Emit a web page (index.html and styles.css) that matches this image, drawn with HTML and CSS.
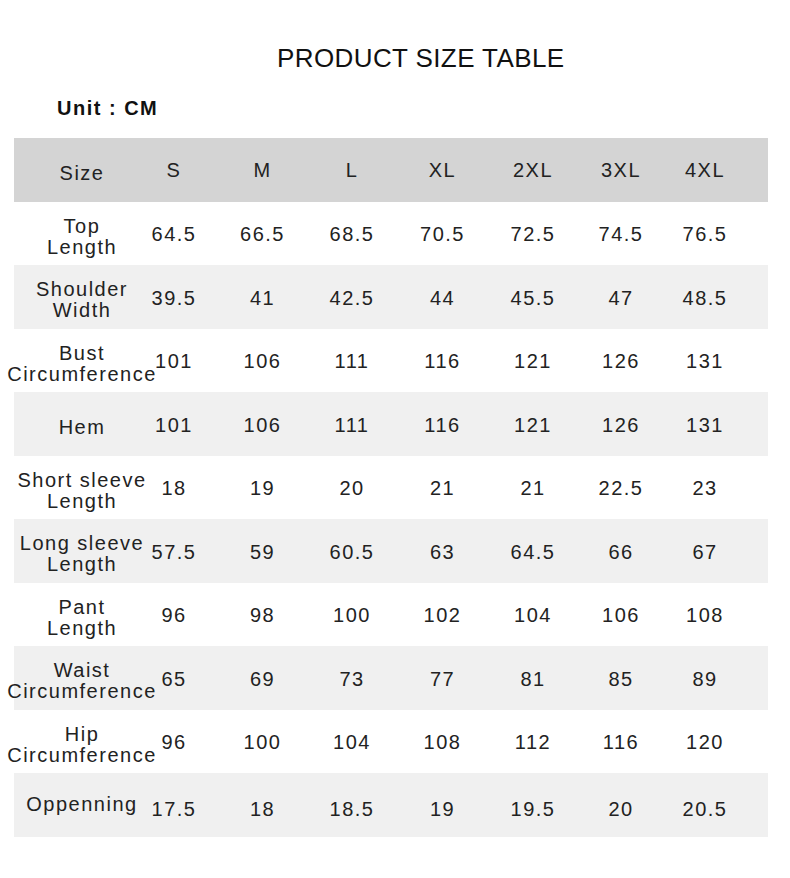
FILE: index.html
```html
<!DOCTYPE html>
<html lang="en">
<head>
<meta charset="utf-8">
<title>Product Size Table</title>
<link rel="stylesheet" href="styles.css">
</head>
<body>
<div class="page">
  <h1 class="title">PRODUCT SIZE TABLE</h1>
  <div class="unit">Unit : CM</div>
  <div class="table">
    <div class="row head">
      <div class="cell label"><span>Size</span></div>
      <div class="cell"><span>S</span></div>
      <div class="cell"><span>M</span></div>
      <div class="cell"><span>L</span></div>
      <div class="cell"><span>XL</span></div>
      <div class="cell"><span>2XL</span></div>
      <div class="cell"><span>3XL</span></div>
      <div class="cell"><span>4XL</span></div>
      <div class="cell"></div>
    </div>
    <div class="row">
      <div class="cell label"><span>Top<br>Length</span></div>
      <div class="cell"><span>64.5</span></div>
      <div class="cell"><span>66.5</span></div>
      <div class="cell"><span>68.5</span></div>
      <div class="cell"><span>70.5</span></div>
      <div class="cell"><span>72.5</span></div>
      <div class="cell"><span>74.5</span></div>
      <div class="cell"><span>76.5</span></div>
      <div class="cell"></div>
    </div>
    <div class="row alt">
      <div class="cell label"><span>Shoulder<br>Width</span></div>
      <div class="cell"><span>39.5</span></div>
      <div class="cell"><span>41</span></div>
      <div class="cell"><span>42.5</span></div>
      <div class="cell"><span>44</span></div>
      <div class="cell"><span>45.5</span></div>
      <div class="cell"><span>47</span></div>
      <div class="cell"><span>48.5</span></div>
      <div class="cell"></div>
    </div>
    <div class="row">
      <div class="cell label"><span>Bust<br>Circumference</span></div>
      <div class="cell"><span>101</span></div>
      <div class="cell"><span>106</span></div>
      <div class="cell"><span>111</span></div>
      <div class="cell"><span>116</span></div>
      <div class="cell"><span>121</span></div>
      <div class="cell"><span>126</span></div>
      <div class="cell"><span>131</span></div>
      <div class="cell"></div>
    </div>
    <div class="row alt">
      <div class="cell label"><span>Hem</span></div>
      <div class="cell"><span>101</span></div>
      <div class="cell"><span>106</span></div>
      <div class="cell"><span>111</span></div>
      <div class="cell"><span>116</span></div>
      <div class="cell"><span>121</span></div>
      <div class="cell"><span>126</span></div>
      <div class="cell"><span>131</span></div>
      <div class="cell"></div>
    </div>
    <div class="row">
      <div class="cell label"><span>Short sleeve<br>Length</span></div>
      <div class="cell"><span>18</span></div>
      <div class="cell"><span>19</span></div>
      <div class="cell"><span>20</span></div>
      <div class="cell"><span>21</span></div>
      <div class="cell"><span>21</span></div>
      <div class="cell"><span>22.5</span></div>
      <div class="cell"><span>23</span></div>
      <div class="cell"></div>
    </div>
    <div class="row alt">
      <div class="cell label"><span>Long sleeve<br>Length</span></div>
      <div class="cell"><span>57.5</span></div>
      <div class="cell"><span>59</span></div>
      <div class="cell"><span>60.5</span></div>
      <div class="cell"><span>63</span></div>
      <div class="cell"><span>64.5</span></div>
      <div class="cell"><span>66</span></div>
      <div class="cell"><span>67</span></div>
      <div class="cell"></div>
    </div>
    <div class="row">
      <div class="cell label"><span>Pant<br>Length</span></div>
      <div class="cell"><span>96</span></div>
      <div class="cell"><span>98</span></div>
      <div class="cell"><span>100</span></div>
      <div class="cell"><span>102</span></div>
      <div class="cell"><span>104</span></div>
      <div class="cell"><span>106</span></div>
      <div class="cell"><span>108</span></div>
      <div class="cell"></div>
    </div>
    <div class="row alt">
      <div class="cell label"><span>Waist<br>Circumference</span></div>
      <div class="cell"><span>65</span></div>
      <div class="cell"><span>69</span></div>
      <div class="cell"><span>73</span></div>
      <div class="cell"><span>77</span></div>
      <div class="cell"><span>81</span></div>
      <div class="cell"><span>85</span></div>
      <div class="cell"><span>89</span></div>
      <div class="cell"></div>
    </div>
    <div class="row">
      <div class="cell label"><span>Hip<br>Circumference</span></div>
      <div class="cell"><span>96</span></div>
      <div class="cell"><span>100</span></div>
      <div class="cell"><span>104</span></div>
      <div class="cell"><span>108</span></div>
      <div class="cell"><span>112</span></div>
      <div class="cell"><span>116</span></div>
      <div class="cell"><span>120</span></div>
      <div class="cell"></div>
    </div>
    <div class="row alt last">
      <div class="cell label up"><span>Oppenning</span></div>
      <div class="cell"><span>17.5</span></div>
      <div class="cell"><span>18</span></div>
      <div class="cell"><span>18.5</span></div>
      <div class="cell"><span>19</span></div>
      <div class="cell"><span>19.5</span></div>
      <div class="cell"><span>20</span></div>
      <div class="cell"><span>20.5</span></div>
      <div class="cell"></div>
    </div>
  </div>
</div>
</body>
</html>
```

FILE: styles.css
```css
html, body {
  margin: 0;
  padding: 0;
  background: #ffffff;
}

body {
  font-family: "Liberation Sans", Arial, sans-serif;
  color: #222222;
}

.page {
  width: 790px;
  height: 878px;
  padding-top: 43px;
  box-sizing: border-box;
}

.title {
  margin: 0 0 0 277px;
  font-size: 26px;
  line-height: 30px;
  font-weight: normal;
  letter-spacing: 0.4px;
  color: #111111;
  white-space: nowrap;
}

.unit {
  margin: 23px 0 0 57px;
  font-size: 20px;
  line-height: 24px;
  font-weight: bold;
  letter-spacing: 1.5px;
  color: #111111;
}

.table {
  margin: 18px 0 0 14px;
  width: 754px;
}

.row {
  display: grid;
  grid-template-columns: 116px 88px 89px 90px 91px 90px 86px 82px 22px;
  height: 63.5px;
  background: #ffffff;
}

.row.alt {
  background: #f0f0f0;
}

.row.head {
  background: #d4d4d4;
}

.cell {
  display: flex;
  align-items: center;
  justify-content: center;
  font-size: 20px;
  line-height: 21px;
  letter-spacing: 1.5px;
  white-space: nowrap;
  padding-top: 3px;
  box-sizing: border-box;
}

.row.head .cell {
  padding-top: 2px;
}

.row.last .cell {
  padding-top: 10px;
}

.cell.label {
  padding-left: 20px;
  padding-top: 7px;
  text-align: center;
}

.row.head .cell.label {
  padding-top: 7px;
}

.row.last .cell.label.up {
  padding-top: 7px;
  padding-bottom: 7px;
}

.cell span {
  display: block;
  text-align: center;
}
```
